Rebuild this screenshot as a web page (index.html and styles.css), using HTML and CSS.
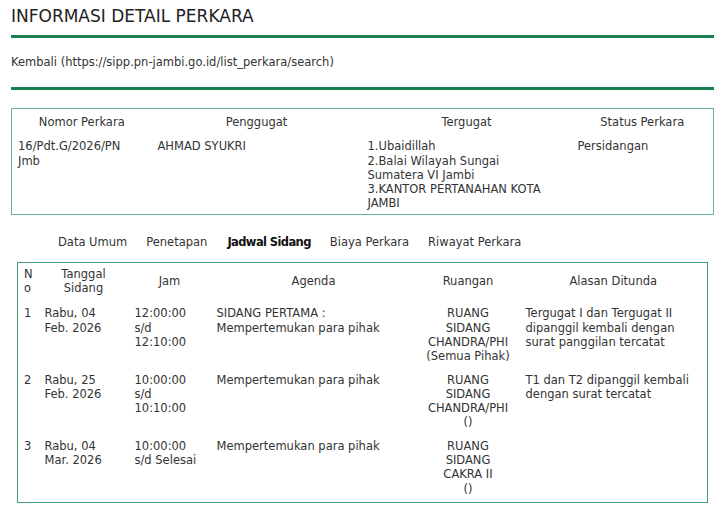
FILE: index.html
```html
<!DOCTYPE html>
<html lang="id">
<head>
<meta charset="utf-8">
<title>Informasi Detail Perkara</title>
<link rel="stylesheet" href="styles.css">
</head>
<body>
<div class="page">
  <h1 class="title">INFORMASI DETAIL PERKARA</h1>
  <div class="rule"></div>
  <p class="back">Kembali (https://sipp.pn-jambi.go.id/list_perkara/search)</p>
  <div class="rule rule-2"></div>

  <table class="info">
    <colgroup>
      <col class="c-nomor"><col class="c-penggugat"><col class="c-tergugat"><col class="c-status">
    </colgroup>
    <thead>
      <tr><th>Nomor Perkara</th><th>Penggugat</th><th>Tergugat</th><th>Status Perkara</th></tr>
    </thead>
    <tbody>
      <tr>
        <td>16/Pdt.G/2026/PN Jmb</td>
        <td>AHMAD SYUKRI</td>
        <td class="tergugat">1.Ubaidillah<br>2.Balai Wilayah Sungai Sumatera VI Jambi<br>3.KANTOR PERTANAHAN KOTA JAMBI</td>
        <td>Persidangan</td>
      </tr>
    </tbody>
  </table>

  <nav class="tabs">
    <span class="tab">Data Umum</span>
    <span class="tab">Penetapan</span>
    <span class="tab active">Jadwal Sidang</span>
    <span class="tab">Biaya Perkara</span>
    <span class="tab">Riwayat Perkara</span>
  </nav>

  <table class="jadwal">
    <colgroup>
      <col class="j-no"><col class="j-tgl"><col class="j-jam"><col class="j-agenda"><col class="j-ruang"><col class="j-alasan">
    </colgroup>
    <thead>
      <tr>
        <th class="no">No</th>
        <th>Tanggal Sidang</th>
        <th>Jam</th>
        <th>Agenda</th>
        <th>Ruangan</th>
        <th>Alasan Ditunda</th>
      </tr>
    </thead>
    <tbody>
      <tr>
        <td>1</td>
        <td>Rabu, 04 Feb. 2026</td>
        <td>12:00:00 s/d 12:10:00</td>
        <td>SIDANG PERTAMA : Mempertemukan para pihak</td>
        <td class="ruang">RUANG SIDANG CHANDRA/PHI<br>(Semua Pihak)</td>
        <td>Tergugat I dan Tergugat II dipanggil kembali dengan surat panggilan tercatat</td>
      </tr>
      <tr>
        <td>2</td>
        <td>Rabu, 25 Feb. 2026</td>
        <td>10:00:00 s/d 10:10:00</td>
        <td>Mempertemukan para pihak</td>
        <td class="ruang">RUANG SIDANG CHANDRA/PHI<br>()</td>
        <td>T1 dan T2 dipanggil kembali dengan surat tercatat</td>
      </tr>
      <tr class="last">
        <td>3</td>
        <td>Rabu, 04 Mar. 2026</td>
        <td>10:00:00 s/d Selesai</td>
        <td>Mempertemukan para pihak</td>
        <td class="ruang">RUANG SIDANG CAKRA II<br>()</td>
        <td></td>
      </tr>
    </tbody>
  </table>
</div>
</body>
</html>
```

FILE: styles.css
```css
html, body {
  margin: 0;
  padding: 0;
  background: #ffffff;
}

body {
  font-family: "DejaVu Sans", "Liberation Sans", sans-serif;
  font-size: 11.5px;
  line-height: 14.3px;
  color: #333333;
}

.page {
  padding: 4px 8px 0 11px;
}

.title {
  margin: 0;
  font-size: 17px;
  line-height: 24px;
  font-weight: normal;
  color: #222222;
}

.rule {
  height: 3px;
  background: #19804f;
  margin-top: 7px;
}

.rule-2 {
  margin-top: 18px;
}

.back {
  margin: 17px 0 0;
  line-height: 14px;
}

table {
  border-collapse: collapse;
  table-layout: fixed;
}

th, td {
  padding: 5px 6px;
  vertical-align: top;
  text-align: left;
  font-weight: normal;
}

th {
  text-align: center;
  vertical-align: middle;
}

.info {
  margin-top: 18px;
  width: 702px;
  border: 1px solid #6ab596;
}

.info thead th {
  padding-top: 6px;
  padding-bottom: 5px;
}

.info tbody td {
  padding-bottom: 3px;
}

.info td.tergugat {
  padding-right: 14px;
}

.c-nomor { width: 140px; }
.c-penggugat { width: 210px; }
.c-tergugat { width: 210px; }
.c-status { width: 142px; }

.tabs {
  display: flex;
  gap: 19px;
  margin-top: 20px;
  padding-left: 47px;
  line-height: 14px;
}

.tab.active {
  font-weight: bold;
  color: #111111;
  letter-spacing: -0.6px;
  margin-left: 1px;
}

.jadwal {
  margin: 13px 0 0 6px;
  width: 690px;
  border: 1px solid #3f9e74;
}

.j-no { width: 21px; }
.j-tgl { width: 90px; }
.j-jam { width: 82px; }
.j-agenda { width: 206px; }
.j-ruang { width: 103px; }
.j-alasan { width: 188px; }

.jadwal th.no {
  text-align: left;
  word-break: break-all;
}

.jadwal thead th {
  padding-top: 4px;
  padding-bottom: 6px;
}

.jadwal tbody td {
  padding-bottom: 4px;
}

.jadwal tbody tr.last td {
  padding-bottom: 6px;
}

.jadwal td.ruang {
  text-align: center;
  padding-left: 8px;
  padding-right: 8px;
}
```
